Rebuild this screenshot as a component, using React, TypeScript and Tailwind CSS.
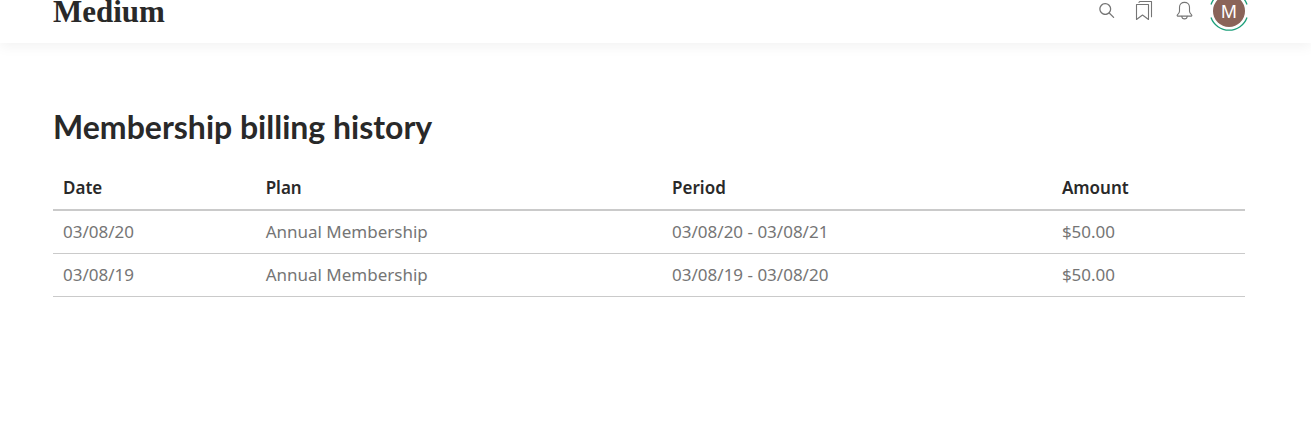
type Payment = { date: string; plan: string; period: string; amount: string };

const payments: Payment[] = [
  { date: "03/08/20", plan: "Annual Membership", period: "03/08/20 - 03/08/21", amount: "$50.00" },
  { date: "03/08/19", plan: "Annual Membership", period: "03/08/19 - 03/08/20", amount: "$50.00" },
];

function SearchIcon() {
  return (
    <svg width="25" height="25" viewBox="0 0 25 25" fill="currentColor" aria-hidden="true">
      <path d="M20.07 18.93l-4.16-4.15a6 6 0 1 0-.88.88l4.15 4.16a.62.62 0 1 0 .89-.89zM6.5 11a4.75 4.75 0 1 1 9.5 0 4.75 4.75 0 0 1-9.5 0z" />
    </svg>
  );
}

function BookmarksIcon() {
  return (
    <svg width="25" height="25" viewBox="0 0 25 25" fill="none" stroke="currentColor" strokeWidth="1.1" strokeLinejoin="round" strokeLinecap="round" aria-hidden="true">
      <path d="M4.5 6.500h12v15l-6-4.500-6 4.500z" />
      <path d="M7 4.400c.2-.6.6-.9 1.200-.9h11.300v15.200" />
    </svg>
  );
}

function BellIcon() {
  return (
    <svg width="25" height="25" viewBox="0 0 25 25" fill="none" stroke="currentColor" strokeWidth="1.1" strokeLinejoin="round" strokeLinecap="round" aria-hidden="true">
      <path d="M5.400 16.800c1.400-1.200 2.100-1.900 2.100-3.600V9.200c0-2.900 2.200-4.800 5-4.800s5 1.900 5 4.800v4c0 1.700.7 2.400 2.100 3.600.5.500.3 1.300-.4 1.300H5.800c-.7 0-.9-.8-.4-1.300z" />
      <path d="M9.800 18.200c.1 1.600 1.200 2.700 2.700 2.700s2.600-1.100 2.700-2.700" />
    </svg>
  );
}

function MemberRing() {
  return (
    <svg className="absolute inset-0" width="40" height="40" viewBox="0 0 40 40" fill="none" stroke="#1c9f7a" strokeWidth="1.300" aria-hidden="true">
      <path d="M2 26.500A19.100 19.100 0 0 0 38 26.500" />
      <path d="M2 13.500A19.100 19.100 0 0 1 38 13.500" />
    </svg>
  );
}

export default function App() {
  return (
    <div className="bg-white font-['Noto_Sans','Open_Sans',sans-serif] text-[#292929]">
      <header className="flex h-[43px] items-end pr-[62px] pl-[53px] shadow-[0_4px_12px_rgba(0,0,0,0.05)]">
        <div className="flex h-[65px] w-full shrink-0 items-center justify-between">
          <a href="#" className="pt-0.5 font-['Liberation_Serif',serif] text-[31px] leading-5 font-bold">
            Medium
          </a>
          <nav className="flex items-center text-[#757575]">
            <button type="button" aria-label="Search">
              <SearchIcon />
            </button>
            <button type="button" aria-label="Reading list" className="ml-[13px]">
              <BookmarksIcon />
            </button>
            <button type="button" aria-label="Notifications" className="ml-[15px]">
              <BellIcon />
            </button>
            <button type="button" aria-label="Account" className="relative ml-3 flex size-10 items-center justify-center">
              <MemberRing />
              <span className="flex size-8 items-center justify-center rounded-full bg-[#8a6459] text-lg leading-8 text-white">
                M
              </span>
            </button>
          </nav>
        </div>
      </header>

      <main className="pt-16 pr-[66px] pb-16 pl-[53px]">
        <h1 className="font-['Lato',sans-serif] text-[32px] leading-10 font-bold">Membership billing history</h1>
        <table className="mt-5 w-full table-fixed border-collapse text-left text-[17px] leading-[22px]">
          <colgroup>
            <col className="w-[17%]" />
            <col className="w-[34.1%]" />
            <col className="w-[32.7%]" />
            <col className="w-[16.2%]" />
          </colgroup>
          <thead>
            <tr className="border-b-2 border-[#cacaca]">
              <th className="px-2.5 py-2.5 font-semibold">Date</th>
              <th className="px-2.5 py-2.5 font-semibold">Plan</th>
              <th className="px-2.5 py-2.5 font-semibold">Period</th>
              <th className="px-2.5 py-2.5 font-semibold">Amount</th>
            </tr>
          </thead>
          <tbody className="text-[#757575]">
            {payments.map((p) => (
              <tr key={p.date} className="border-b border-[#cacaca]">
                <td className="px-2.5 py-2.5">{p.date}</td>
                <td className="px-2.5 py-2.5">{p.plan}</td>
                <td className="px-2.5 py-2.5">{p.period}</td>
                <td className="px-2.5 py-2.5">{p.amount}</td>
              </tr>
            ))}
          </tbody>
        </table>
      </main>
    </div>
  );
}
